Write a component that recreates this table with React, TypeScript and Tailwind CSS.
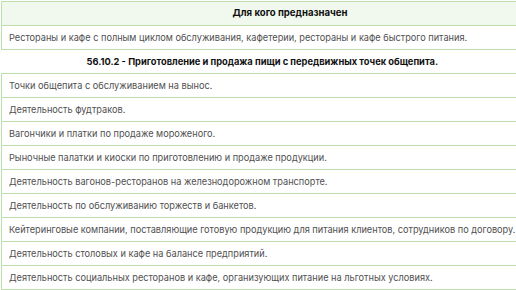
const rowsTop = [
  'Рестораны и кафе с полным циклом обслуживания, кафетерии, рестораны и кафе быстрого питания.',
]

const rowsBottom = [
  'Точки общепита с обслуживанием на вынос.',
  'Деятельность фудтраков.',
  'Вагончики и платки по продаже мороженого.',
  'Рыночные палатки и киоски по приготовлению и продаже продукции.',
  'Деятельность вагонов-ресторанов на железнодорожном транспорте.',
  'Деятельность по обслуживанию торжеств и банкетов.',
  'Кейтеринговые компании, поставляющие готовую продукцию для питания клиентов, сотрудников по договору.',
  'Деятельность столовых и кафе на балансе предприятий.',
  'Деятельность социальных ресторанов и кафе, организующих питание на льготных условиях.',
]

function Row({ text }: { text: string }) {
  return (
    <tr className="h-[24px]">
      <td className="border-y border-l border-[#bcdfab] pl-[7px] text-[9.2px] text-[#505050] whitespace-nowrap">
        {text}
      </td>
    </tr>
  )
}

export default function App() {
  return (
    <div className="w-[516px] h-[290px] overflow-hidden bg-white pt-px pl-px font-['Inter',sans-serif]">
      <table className="w-[522px] border-collapse">
        <tbody>
          {/* Header */}
          <tr className="h-[24px]">
            <th className="border-y border-l border-[#bcdfab] bg-[#f1f8ee] pl-[55px] text-center text-[9.6px] font-bold text-[#111]">
              Для кого предназначен
            </th>
          </tr>
          {rowsTop.map((t) => (
            <Row key={t} text={t} />
          ))}

          {/* Section */}
          <tr className="h-[24px]">
            <td className="border-y border-[#bcdfab] text-center text-[9.3px] font-bold text-[#111]">
              56.10.2 - Приготовление и продажа пищи с передвижных точек общепита.
            </td>
          </tr>
          {rowsBottom.map((t) => (
            <Row key={t} text={t} />
          ))}
        </tbody>
      </table>
    </div>
  )
}
